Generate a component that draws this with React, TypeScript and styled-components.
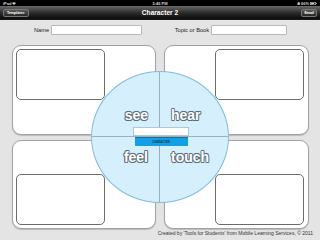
import React from 'react';
import styled, { createGlobalStyle } from 'styled-components';

const GlobalStyle = createGlobalStyle`
  html, body {
    margin: 0;
    padding: 0;
    background: #e4e4e4;
  }
  body {
    font-family: "Liberation Sans", Arial, sans-serif;
  }
`;

const Screen = styled.div`
  width: 320px;
  height: 240px;
  overflow: hidden;
  display: flex;
  flex-direction: column;
  background: #e4e4e4;
`;

const StatusBar = styled.div`
  height: 6px;
  background: #000;
  color: #cfcfcf;
  font-size: 4px;
  font-weight: bold;
  display: grid;
  grid-template-columns: 1fr auto 1fr;
  align-items: center;
  padding: 0 3px;
`;

const StatusSide = styled.div<{ $right?: boolean }>`
  display: flex;
  align-items: center;
  gap: 1px;
  justify-content: ${(p) => (p.$right ? 'flex-end' : 'flex-start')};
`;

const NavBar = styled.div`
  height: 14px;
  background: linear-gradient(#6a6a6a 0%, #2e2e2e 50%, #0a0a0a 100%);
  display: grid;
  grid-template-columns: 1fr auto 1fr;
  align-items: center;
  padding: 0 3px;
  border-bottom: 1px solid #1a1a1a;
  box-sizing: border-box;
`;

const NavTitle = styled.div`
  color: #fff;
  font-size: 6.6px;
  font-weight: bold;
`;

const NavButton = styled.div<{ $right?: boolean }>`
  justify-self: ${(p) => (p.$right ? 'end' : 'start')};
  height: 8px;
  padding: 0 ${(p) => (p.$right ? '2px' : '3px')};
  border-radius: 2px;
  border: 0.5px solid #777;
  background: linear-gradient(#5a5a5a, #262626);
  color: #fff;
  font-size: 3.6px;
  font-weight: bold;
  display: flex;
  align-items: center;
  box-sizing: border-box;
`;

const Content = styled.div`
  flex: 1;
  display: flex;
  flex-direction: column;
`;

const FormRow = styled.div`
  display: flex;
  align-items: center;
  gap: 33px;
  padding-left: 34px;
  margin-top: 5px;
`;

const Field = styled.div`
  display: flex;
  align-items: center;
  gap: 1.5px;
`;

const Label = styled.span`
  font-size: 5.7px;
  color: #222;
`;

const TextInput = styled.div<{ $w: number }>`
  width: ${(p) => p.$w}px;
  height: 10px;
  background: #fff;
  border: 1px solid #b8b8b8;
  border-radius: 1px;
  box-sizing: border-box;
`;

const Board = styled.div`
  position: relative;
  margin-top: 10px;
`;

const CardGrid = styled.div`
  display: grid;
  grid-template-columns: 144px 145px;
  grid-template-rows: 90px 89px;
  column-gap: 8px;
  row-gap: 5px;
  padding-left: 12px;
`;

const Card = styled.div<{ $right?: boolean; $bottom?: boolean }>`
  background: #fff;
  border: 1px solid #a2a2a2;
  border-radius: 9px;
  box-shadow: 0 1px 1px rgba(0, 0, 0, 0.18);
  padding: 3px ${(p) => (p.$right ? '4px' : '3px')} 3px 3px;
  display: flex;
  justify-content: ${(p) => (p.$right ? 'flex-end' : 'flex-start')};
  align-items: ${(p) => (p.$bottom ? 'flex-end' : 'flex-start')};
  box-sizing: border-box;
`;

const NoteBox = styled.div`
  width: 89px;
  height: 51px;
  border: 1px solid #6c6c6c;
  border-radius: 5px;
  box-sizing: border-box;
`;

const Wheel = styled.div`
  position: absolute;
  left: 91px;
  top: 26px;
  width: 138px;
  height: 132px;
  border-radius: 50%;
  background: #d5effc;
  border: 1px solid #80bedb;
  box-sizing: border-box;
  overflow: hidden;
  display: grid;
  grid-template-columns: 1fr 1fr;
  grid-template-rows: 1fr 1fr;
`;

const Quadrant = styled.div<{ $right?: boolean; $bottom?: boolean }>`
  display: flex;
  justify-content: ${(p) => (p.$right ? 'flex-start' : 'flex-end')};
  align-items: ${(p) => (p.$bottom ? 'flex-start' : 'flex-end')};
  padding: ${(p) => (p.$bottom ? '12px 11px 0 11px' : '0 11px 13px 11px')};
  border-right: ${(p) => (p.$right ? 'none' : '1px solid #93b3c2')};
  border-bottom: ${(p) => (p.$bottom ? 'none' : '1px solid #93b3c2')};
  box-sizing: border-box;
`;

const Sense = styled.span`
  font-size: 14px;
  font-weight: bold;
  line-height: 16px;
  color: #fff;
  text-shadow:
    0.8px 0 0 #5f6f7a,
    -0.8px 0 0 #5f6f7a,
    0 0.8px 0 #5f6f7a,
    0 -0.8px 0 #5f6f7a,
    0.6px 0.6px 0 #5f6f7a,
    -0.6px -0.6px 0 #5f6f7a,
    0.6px -0.6px 0 #5f6f7a,
    -0.6px 0.6px 0 #5f6f7a,
    0 0 2px #9fd3ef;
`;

const CenterStack = styled.div`
  position: absolute;
  left: 41px;
  top: 55px;
  width: 56px;
  display: flex;
  flex-direction: column;
  align-items: center;
  gap: 1px;
`;

const CenterInput = styled.div`
  width: 56px;
  height: 9px;
  background: #fff;
  border: 0.5px solid #b0c8d4;
  box-sizing: border-box;
`;

const CharacterButton = styled.div`
  width: 53px;
  height: 9px;
  background: #129fe6;
  border-top: 1px solid #2a6b8f;
  color: #1c3a4c;
  font-size: 2.8px;
  font-weight: bold;
  display: flex;
  align-items: center;
  justify-content: center;
  box-sizing: border-box;
`;

const Footer = styled.div`
  text-align: right;
  padding-right: 7px;
  font-size: 5px;
  color: #333;
  margin-top: 1px;
`;

const senses = [
  { word: 'see', right: false, bottom: false },
  { word: 'hear', right: true, bottom: false },
  { word: 'feel', right: false, bottom: true },
  { word: 'touch', right: true, bottom: true },
];

const WifiIcon = () => (
  <svg width="4" height="3" viewBox="0 0 8 6">
    <path d="M0 2 Q4 -1 8 2 L4 6 Z" fill="#cfcfcf" />
  </svg>
);

const BatteryIcon = () => (
  <svg width="7" height="3" viewBox="0 0 14 6">
    <rect x="0.5" y="0.5" width="11" height="5" fill="none" stroke="#cfcfcf" />
    <rect x="1.5" y="1.5" width="7" height="3" fill="#cfcfcf" />
    <rect x="12" y="2" width="1.5" height="2" fill="#cfcfcf" />
  </svg>
);

const App = () => {
  return (
    <Screen>
      <GlobalStyle />
      <StatusBar>
        <StatusSide>
          iPad <WifiIcon />
        </StatusSide>
        <span>5:46 PM</span>
        <StatusSide $right>
          ✱ 66% <BatteryIcon />
        </StatusSide>
      </StatusBar>
      <NavBar>
        <NavButton>Templates</NavButton>
        <NavTitle>Character 2</NavTitle>
        <NavButton $right>Email</NavButton>
      </NavBar>
      <Content>
        <FormRow>
          <Field>
            <Label>Name</Label>
            <TextInput $w={91} />
          </Field>
          <Field>
            <Label>Topic or Book</Label>
            <TextInput $w={76} />
          </Field>
        </FormRow>
        <Board>
          <CardGrid>
            {senses.map((s) => (
              <Card key={s.word} $right={s.right} $bottom={s.bottom}>
                <NoteBox />
              </Card>
            ))}
          </CardGrid>
          <Wheel>
            {senses.map((s) => (
              <Quadrant key={s.word} $right={s.right} $bottom={s.bottom}>
                <Sense>{s.word}</Sense>
              </Quadrant>
            ))}
            <CenterStack>
              <CenterInput />
              <CharacterButton>CHARACTER</CharacterButton>
            </CenterStack>
          </Wheel>
        </Board>
        <Footer>
          Created by 'Tools for Students' from Mobile Learning Services, © 2011
        </Footer>
      </Content>
    </Screen>
  );
};

export default App;
